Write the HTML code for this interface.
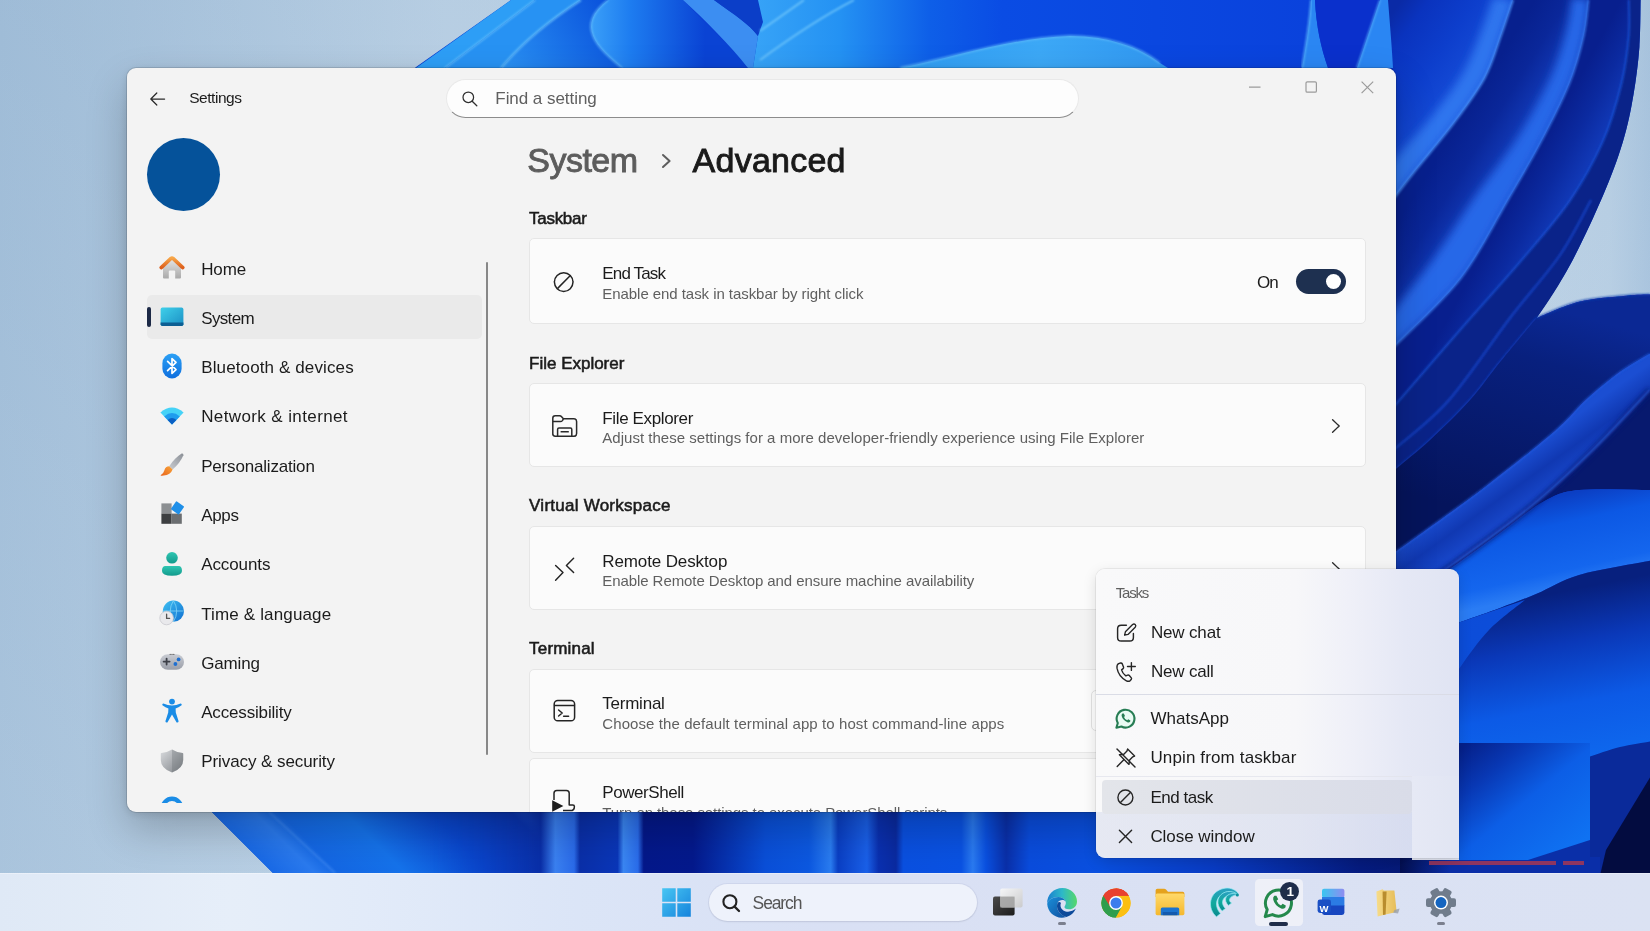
<!DOCTYPE html>
<html lang="en"><head><meta charset="utf-8"><title>Settings</title>
<style>
*{box-sizing:border-box;margin:0;padding:0}
html,body{width:1650px;height:931px;overflow:hidden;background:#abc5dd}
body{position:relative;font-family:"Liberation Sans",sans-serif;color:#1b1b1b}
.abs{position:absolute}
.t{position:absolute;white-space:nowrap;line-height:1}
#win{position:absolute;left:127px;top:68px;width:1269px;height:744px;background:#f3f3f3;border-radius:9px;overflow:hidden;box-shadow:0 0 0 1px rgba(0,0,0,.12),0 18px 40px rgba(0,0,0,.22),0 2px 10px rgba(0,0,0,.12)}
#winclip{position:absolute;left:0;top:0;width:1269px;height:744px;overflow:hidden}
.card{position:absolute;left:402px;width:837px;background:#fbfbfb;border:1px solid #e6e6e6;border-radius:5px}
.sb{position:absolute;left:319px;top:10.6px;width:633px;height:39px;border-radius:20px;background:#fdfdfd;border:1px solid #e9e9e9;border-bottom-color:#8c8c8c}
#menu{position:absolute;left:1096px;top:569px;width:363px;height:289px;border-radius:9px 9px 0 9px;background:linear-gradient(90deg,#f9f9fa 0%,#f7f7f9 55%,#eff0f8 70%,#e5e8f5 85%,#e0e4f3 100%);box-shadow:0 0 0 1px rgba(0,0,0,.06),0 4px 14px rgba(0,0,0,.13);overflow:hidden}
#tb{position:absolute;left:0;top:873px;width:1650px;height:58px;background:linear-gradient(90deg,#dfe9f6 0%,#e6eef9 14%,#e2ebf9 22%,#dbe5f7 35%,#d9e0f4 50%,#dbe2f3 100%)}
.ind{position:absolute;top:49px;height:3px;border-radius:2px;background:#7b7f8e}
#win,#menu,#tb{will-change:transform}
</style>
</head><body>
<svg id="wall" width="1650" height="931" viewBox="0 0 1650 931" style="position:absolute;left:0;top:0">
<defs><linearGradient id="gPale" x1="0" y1="0" x2="1" y2="0"><stop offset="0" stop-color="#a3bfd9"/><stop offset="0.08" stop-color="#abc5dd"/><stop offset="0.27" stop-color="#c2d6e8"/><stop offset="0.9" stop-color="#c6d9ea"/><stop offset="0.975" stop-color="#bfd4e7"/><stop offset="1" stop-color="#adc7e0"/></linearGradient>
<linearGradient id="gPaleV" x1="0" y1="0" x2="0" y2="1"><stop offset="0" stop-color="#8fb0cf" stop-opacity="0.22"/><stop offset="1" stop-color="#c3d7ea" stop-opacity="0.22"/></linearGradient>
<filter id="b1" x="-10%" y="-10%" width="120%" height="120%"><feGaussianBlur stdDeviation="0.8"/></filter><filter id="b2" x="-10%" y="-10%" width="120%" height="120%"><feGaussianBlur stdDeviation="2"/></filter><filter id="b4" x="-20%" y="-20%" width="140%" height="140%"><feGaussianBlur stdDeviation="4"/></filter><filter id="b8" x="-20%" y="-20%" width="140%" height="140%"><feGaussianBlur stdDeviation="9"/></filter>
<linearGradient id="gTopMain" gradientUnits="userSpaceOnUse" x1="750" y1="0" x2="1310" y2="0"><stop offset="0" stop-color="#38a4f7"/><stop offset="0.16" stop-color="#2492f3"/><stop offset="0.32" stop-color="#0e5fe8"/><stop offset="0.45" stop-color="#0a4ce4"/><stop offset="1" stop-color="#0a42dc"/></linearGradient>
<linearGradient id="gP4" gradientUnits="userSpaceOnUse" x1="591" y1="0" x2="705" y2="0"><stop offset="0" stop-color="#3a9ff8"/><stop offset="0.35" stop-color="#1d7cf0"/><stop offset="1" stop-color="#0a43d4"/></linearGradient>
<linearGradient id="gP3" gradientUnits="userSpaceOnUse" x1="500" y1="67" x2="610" y2="10"><stop offset="0" stop-color="#2a93f4"/><stop offset="1" stop-color="#0a52dc"/></linearGradient>
<linearGradient id="gP9" gradientUnits="userSpaceOnUse" x1="900" y1="0" x2="1180" y2="0"><stop offset="0" stop-color="#2f9df4"/><stop offset="0.5" stop-color="#3ca8f6"/><stop offset="1" stop-color="#2f95f0"/></linearGradient>
<linearGradient id="g0" gradientUnits="userSpaceOnUse" x1="1380" y1="30" x2="1470" y2="95"><stop offset="0" stop-color="#0a2aa6"/><stop offset="0.2" stop-color="#0a33be"/><stop offset="0.55" stop-color="#0d3ecc"/><stop offset="1" stop-color="#1850da"/></linearGradient>
<linearGradient id="g1" gradientUnits="userSpaceOnUse" x1="1462" y1="118" x2="1530" y2="160"><stop offset="0" stop-color="#07208e"/><stop offset="0.35" stop-color="#0a279a"/><stop offset="1" stop-color="#1747cc"/></linearGradient>
<linearGradient id="g2" gradientUnits="userSpaceOnUse" x1="1545" y1="140" x2="1600" y2="170"><stop offset="0" stop-color="#081f8e"/><stop offset="0.4" stop-color="#0b2aa0"/><stop offset="1" stop-color="#1440c2"/></linearGradient>
<linearGradient id="gLP" gradientUnits="userSpaceOnUse" x1="1560" y1="310" x2="1500" y2="520"><stop offset="0" stop-color="#0b2894"/><stop offset="0.25" stop-color="#08207e"/><stop offset="1" stop-color="#05145c"/></linearGradient>
<linearGradient id="gE" gradientUnits="userSpaceOnUse" x1="1500" y1="470" x2="1530" y2="512"><stop offset="0" stop-color="#1b4ed2"/><stop offset="0.45" stop-color="#1038b2"/><stop offset="1" stop-color="#1a4cd2"/></linearGradient>
<linearGradient id="gF" gradientUnits="userSpaceOnUse" x1="1540" y1="500" x2="1560" y2="590"><stop offset="0" stop-color="#0b3fc4"/><stop offset="0.3" stop-color="#0c58e4"/><stop offset="0.8" stop-color="#1466ee"/><stop offset="1" stop-color="#2a7cf4"/></linearGradient>
<linearGradient id="gH" gradientUnits="userSpaceOnUse" x1="1520" y1="600" x2="1560" y2="800"><stop offset="0" stop-color="#07207e"/><stop offset="0.25" stop-color="#0a38b8"/><stop offset="0.55" stop-color="#0c5ae6"/><stop offset="1" stop-color="#1070f2"/></linearGradient>
<linearGradient id="gH1" gradientUnits="userSpaceOnUse" x1="1440" y1="640" x2="1500" y2="700"><stop offset="0" stop-color="#0c4cd8"/><stop offset="1" stop-color="#0c50dc"/></linearGradient>
<linearGradient id="gUM" gradientUnits="userSpaceOnUse" x1="1395" y1="0" x2="1450" y2="0"><stop offset="0" stop-color="#030c48"/><stop offset="1" stop-color="#0a2ea8"/></linearGradient>
<linearGradient id="gBot" gradientUnits="userSpaceOnUse" x1="200" y1="0" x2="1650" y2="0"><stop offset="0" stop-color="#1663e0"/><stop offset="0.03" stop-color="#1a6ae6"/><stop offset="0.058" stop-color="#2a7aee"/><stop offset="0.075" stop-color="#1467e3"/><stop offset="0.12" stop-color="#1572ea"/><stop offset="0.18" stop-color="#0a46cc"/><stop offset="0.235" stop-color="#0a2fa8"/><stop offset="0.245" stop-color="#3a80f0"/><stop offset="0.258" stop-color="#2a6ae8"/><stop offset="0.262" stop-color="#0a2fa8"/><stop offset="0.288" stop-color="#0a36b8"/><stop offset="0.292" stop-color="#3a86f2"/><stop offset="0.302" stop-color="#2a6cea"/><stop offset="0.306" stop-color="#04188a"/><stop offset="0.34" stop-color="#04198c"/><stop offset="0.39" stop-color="#0a4fd8"/><stop offset="0.42" stop-color="#0c58e0"/><stop offset="0.435" stop-color="#2a7cf0"/><stop offset="0.44" stop-color="#0a3fc4"/><stop offset="0.46" stop-color="#1a60e8"/><stop offset="0.468" stop-color="#0a30b0"/><stop offset="0.48" stop-color="#0a2aa0"/><stop offset="0.485" stop-color="#0a50e0"/><stop offset="0.525" stop-color="#0a52e2"/><stop offset="0.533" stop-color="#2a7af0"/><stop offset="0.542" stop-color="#0a50e0"/><stop offset="0.556" stop-color="#0a2fa8"/><stop offset="0.572" stop-color="#0a4cdc"/><stop offset="0.62" stop-color="#0a50e0"/><stop offset="0.7" stop-color="#0a3cc4"/><stop offset="0.8" stop-color="#061c80"/><stop offset="1" stop-color="#030c48"/></linearGradient>
<linearGradient id="gBotL" gradientUnits="userSpaceOnUse" x1="200" y1="842" x2="925" y2="117"><stop offset="0" stop-color="#1663e0"/><stop offset="0.03" stop-color="#1a6ae6"/><stop offset="0.058" stop-color="#2a7aee"/><stop offset="0.075" stop-color="#1467e3"/><stop offset="0.12" stop-color="#1572ea"/><stop offset="0.18" stop-color="#0a46cc"/><stop offset="0.235" stop-color="#0a2fa8"/><stop offset="0.245" stop-color="#3a80f0"/><stop offset="0.258" stop-color="#2a6ae8"/><stop offset="0.262" stop-color="#0a2fa8"/><stop offset="0.288" stop-color="#0a36b8"/><stop offset="0.292" stop-color="#3a86f2"/><stop offset="0.302" stop-color="#2a6cea"/><stop offset="0.306" stop-color="#04188a"/><stop offset="0.34" stop-color="#04198c"/><stop offset="0.39" stop-color="#0a4fd8"/><stop offset="0.42" stop-color="#0c58e0"/><stop offset="0.435" stop-color="#2a7cf0"/><stop offset="0.44" stop-color="#0a3fc4"/><stop offset="0.46" stop-color="#1a60e8"/><stop offset="0.468" stop-color="#0a30b0"/><stop offset="0.48" stop-color="#0a2aa0"/><stop offset="0.485" stop-color="#0a50e0"/><stop offset="0.525" stop-color="#0a52e2"/><stop offset="0.533" stop-color="#2a7af0"/><stop offset="0.542" stop-color="#0a50e0"/><stop offset="0.556" stop-color="#0a2fa8"/><stop offset="0.572" stop-color="#0a4cdc"/><stop offset="0.62" stop-color="#0a50e0"/><stop offset="0.7" stop-color="#0a3cc4"/><stop offset="0.8" stop-color="#061c80"/><stop offset="1" stop-color="#030c48"/></linearGradient>
<linearGradient id="gFade" gradientUnits="userSpaceOnUse" x1="430" y1="0" x2="540" y2="0"><stop offset="0" stop-color="#fff"/><stop offset="1" stop-color="#000"/></linearGradient><mask id="mFade" maskUnits="userSpaceOnUse" x="200" y="800" width="400" height="80"><rect x="200" y="800" width="400" height="80" fill="url(#gFade)"/></mask>
<linearGradient id="gRect" gradientUnits="userSpaceOnUse" x1="1465" y1="745" x2="1560" y2="860"><stop offset="0" stop-color="#05208a"/><stop offset="0.25" stop-color="#0838b4"/><stop offset="0.55" stop-color="#0c5ee6"/><stop offset="1" stop-color="#0f72f2"/></linearGradient></defs>
<rect width="1650" height="931" fill="url(#gPale)"/><rect width="1650" height="931" fill="url(#gPaleV)"/>
<path d="M511.0 0.0 L416.0 67.0 L160.0 300.0 L127.0 600.0 L212.0 812.0 L273.0 873.0 L1650.0 873.0 L1650.0 294.6 C1646.0 294.8 1637.8 294.5 1626.0 295.7 C1614.2 296.9 1593.9 298.0 1579.0 301.7 C1564.1 305.4 1543.7 315.3 1536.6 318.0 L1536.6 318.0 C1542.2 309.2 1559.0 285.3 1570.0 265.0 C1581.0 244.7 1594.0 216.5 1602.8 196.0 C1611.6 175.5 1617.8 158.7 1622.9 141.8 C1628.0 124.9 1630.8 110.4 1633.5 94.6 C1636.2 78.8 1638.2 62.8 1639.4 47.0 C1640.6 31.2 1640.4 7.8 1640.6 0.0 Z" fill="#0a3fd2"/>
<path d="M511 0 L535 0 L445 68 L416 68 Z" fill="#2d9ef6"/>
<path d="M535 0 L581 0 C550 20 520 45 501 68 L445 68 Z" fill="#2792f3"/>
<path d="M581 0 L608 0 C592 12 588 24 593 36 C598 48 610 58 622 68 L501 68 C520 45 550 20 581 0 Z" fill="url(#gP3)"/>
<path d="M608 0 C592 12 588 24 593 36 C598 48 610 58 622 68 L750 68 L683 0 Z" fill="url(#gP4)"/>
<path d="M683 0 L714 0 C735 15 750 25 758 36 L753 68 L748 68 C730 45 705 20 683 0 Z" fill="#3c8ef2"/>
<path d="M714 0 L758 0 L763 22 L758 36 C750 25 735 15 714 0 Z" fill="#0b3ec8"/>
<path d="M753 68 L758 36 L763 22 L758 0 L1310 0 L1310 68 Z" fill="url(#gTopMain)"/>
<path d="M760 31 L804 0 M760 60 C790 38 825 15 854 0" stroke="#6cc4fb" stroke-width="1.6" fill="none" filter="url(#b1)"/>
<path d="M900 68 C960 56 1010 38 1070 36 C1110 36 1140 48 1160 63 L1168 68 Z" fill="url(#gP9)"/>
<path d="M900 68 C960 56 1010 38 1070 36 C1110 36 1140 48 1160 63" stroke="#62bcfa" stroke-width="1.5" fill="none" filter="url(#b1)"/>
<path d="M1311 0 L1315 0 C1316 25 1321 48 1328 68 L1302 68 C1306 45 1310 22 1311 0 Z" fill="#2a86f3"/><path d="M1311 0 C1310 22 1306 45 1302 68" stroke="#5ab4fa" stroke-width="1.6" fill="none" filter="url(#b1)"/>
<path d="M1315 0 L1380 0 L1357 68 L1328 68 C1321 48 1316 25 1315 0 Z" fill="#0a30cc"/>

<path d="M535 0 L445 68 M581 0 C550 20 520 45 501 68" stroke="#6ec6fc" stroke-width="1.5" fill="none" filter="url(#b1)"/>
<path d="M608 0 C592 12 588 24 593 36 C598 48 610 58 622 68" stroke="#66bdfb" stroke-width="1.5" fill="none" filter="url(#b1)"/>
<path d="M1385.0 0.0 L1513.0 0.0 C1511.0 5.9 1505.7 22.5 1501.0 35.5 C1496.3 48.5 1492.5 63.4 1484.6 78.0 C1476.7 92.6 1465.6 107.2 1453.8 123.0 C1442.0 138.8 1425.1 158.1 1413.6 172.6 C1402.1 187.1 1389.8 203.8 1385.0 210.0 Z" fill="url(#g0)"/>
<path d="M1493.0 -3.0 C1491.0 2.8 1486.0 19.3 1481.0 32.0 C1476.0 44.7 1471.0 59.2 1463.0 73.0 C1455.0 86.8 1444.5 100.5 1433.0 115.0 C1421.5 129.5 1403.0 149.7 1394.0 160.0 C1385.0 170.3 1381.5 174.2 1379.0 177.0 L1385.0 210.0 C1389.8 203.8 1402.1 187.1 1413.6 172.6 C1425.1 158.1 1442.0 138.8 1453.8 123.0 C1465.6 107.2 1476.7 92.6 1484.6 78.0 C1492.5 63.4 1496.3 48.5 1501.0 35.5 C1505.7 22.5 1511.0 5.9 1513.0 0.0 Z" fill="#2d74ee" filter="url(#b4)"/>
<path d="M1513.0 0.0 C1511.0 5.9 1505.7 22.5 1501.0 35.5 C1496.3 48.5 1492.5 63.4 1484.6 78.0 C1476.7 92.6 1465.6 107.2 1453.8 123.0 C1442.0 138.8 1425.1 158.1 1413.6 172.6 C1402.1 187.1 1389.8 203.8 1385.0 210.0 L1385.0 356.0 C1387.0 354.0 1384.3 357.0 1397.0 344.0 C1409.7 331.0 1442.5 302.0 1461.0 278.0 C1479.5 254.0 1494.7 222.7 1508.0 200.0 C1521.3 177.3 1530.7 161.6 1541.0 142.0 C1551.3 122.5 1562.6 100.5 1569.7 82.7 C1576.8 65.0 1580.7 49.3 1583.8 35.5 C1586.9 21.7 1587.8 5.9 1588.6 0.0 Z" fill="url(#g1)"/>
<path d="M1513.0 0.0 C1511.0 5.9 1505.7 22.5 1501.0 35.5 C1496.3 48.5 1492.5 63.4 1484.6 78.0 C1476.7 92.6 1465.6 107.2 1453.8 123.0 C1442.0 138.8 1425.1 158.1 1413.6 172.6 C1402.1 187.1 1389.8 203.8 1385.0 210.0" stroke="#4c94f8" stroke-width="1.8" fill="none" filter="url(#b1)"/>
<path d="M1572.0 -3.0 C1571.0 2.8 1569.7 18.3 1566.0 32.0 C1562.3 45.7 1558.2 61.2 1550.0 79.0 C1541.8 96.8 1529.5 119.3 1517.0 139.0 C1504.5 158.7 1488.7 177.3 1475.0 197.0 C1461.3 216.7 1448.8 237.7 1435.0 257.0 C1421.2 276.3 1401.2 301.3 1392.0 313.0 C1382.8 324.7 1382.0 324.7 1380.0 327.0 L1385.0 356.0 C1387.0 354.0 1384.3 357.0 1397.0 344.0 C1409.7 331.0 1442.5 302.0 1461.0 278.0 C1479.5 254.0 1494.7 222.7 1508.0 200.0 C1521.3 177.3 1530.7 161.6 1541.0 142.0 C1551.3 122.5 1562.6 100.5 1569.7 82.7 C1576.8 65.0 1580.7 49.3 1583.8 35.5 C1586.9 21.7 1587.8 5.9 1588.6 0.0 Z" fill="#2668e8" filter="url(#b4)"/>
<path d="M1588.6 0.0 C1587.8 5.9 1586.9 21.7 1583.8 35.5 C1580.7 49.3 1576.8 65.0 1569.7 82.7 C1562.6 100.5 1551.3 122.5 1541.0 142.0 C1530.7 161.6 1521.3 177.3 1508.0 200.0 C1494.7 222.7 1479.5 254.0 1461.0 278.0 C1442.5 302.0 1409.7 331.0 1397.0 344.0 C1384.3 357.0 1387.0 354.0 1385.0 356.0 L1385.0 415.0 C1387.0 413.0 1384.5 417.2 1397.0 403.0 C1409.5 388.8 1439.5 353.5 1460.0 330.0 C1480.5 306.5 1501.7 283.5 1520.0 262.0 C1538.3 240.5 1555.9 221.0 1569.7 201.0 C1583.5 181.0 1594.1 161.5 1602.8 141.8 C1611.5 122.1 1617.4 100.4 1621.7 82.7 C1626.0 65.0 1627.6 49.3 1628.8 35.5 C1630.0 21.7 1628.8 5.9 1628.8 0.0 Z" fill="url(#g2)"/>
<path d="M1588.6 0.0 C1587.8 5.9 1586.9 21.7 1583.8 35.5 C1580.7 49.3 1576.8 65.0 1569.7 82.7 C1562.6 100.5 1551.3 122.5 1541.0 142.0 C1530.7 161.6 1521.3 177.3 1508.0 200.0 C1494.7 222.7 1479.5 254.0 1461.0 278.0 C1442.5 302.0 1409.7 331.0 1397.0 344.0 C1384.3 357.0 1387.0 354.0 1385.0 356.0" stroke="#3f84f4" stroke-width="1.5" fill="none" filter="url(#b1)"/>
<path d="M1628.8 0.0 C1628.8 5.9 1630.0 21.7 1628.8 35.5 C1627.6 49.3 1626.0 65.0 1621.7 82.7 C1617.4 100.4 1611.5 122.1 1602.8 141.8 C1594.1 161.5 1583.5 181.0 1569.7 201.0 C1555.9 221.0 1538.3 240.5 1520.0 262.0 C1501.7 283.5 1480.5 306.5 1460.0 330.0 C1439.5 353.5 1409.5 388.8 1397.0 403.0 C1384.5 417.2 1387.0 413.0 1385.0 415.0 L1385.0 478.0 C1387.0 476.3 1389.5 474.3 1397.0 468.0 C1404.5 461.7 1417.8 451.3 1430.0 440.0 C1442.2 428.7 1458.3 413.0 1470.0 400.0 C1481.7 387.0 1488.9 375.7 1500.0 362.0 C1511.1 348.3 1524.9 334.2 1536.6 318.0 C1548.3 301.8 1559.0 285.3 1570.0 265.0 C1581.0 244.7 1594.0 216.5 1602.8 196.0 C1611.6 175.5 1617.8 158.7 1622.9 141.8 C1628.0 124.9 1630.8 110.4 1633.5 94.6 C1636.2 78.8 1638.2 62.8 1639.4 47.0 C1640.6 31.2 1640.4 7.8 1640.6 0.0 Z" fill="#0a2389"/>
<path d="M1628.8 0.0 C1628.8 5.9 1630.0 21.7 1628.8 35.5 C1627.6 49.3 1626.0 65.0 1621.7 82.7 C1617.4 100.4 1611.5 122.1 1602.8 141.8 C1594.1 161.5 1583.5 181.0 1569.7 201.0 C1555.9 221.0 1538.3 240.5 1520.0 262.0 C1501.7 283.5 1480.5 306.5 1460.0 330.0 C1439.5 353.5 1409.5 388.8 1397.0 403.0 C1384.5 417.2 1387.0 413.0 1385.0 415.0" stroke="#1d52d4" stroke-width="1.6" fill="none" filter="url(#b1)"/>
<path d="M1591.0 200.0 C1585.8 209.2 1573.5 235.3 1560.0 255.0 C1546.5 274.7 1528.5 293.8 1510.0 318.0 C1491.5 342.2 1467.8 378.5 1449.0 400.0 C1430.2 421.5 1407.7 437.5 1397.0 447.0 C1386.3 456.5 1387.0 455.3 1385.0 457.0" stroke="#153fc0" stroke-width="2.2" fill="none" filter="url(#b1)"/>
<path d="M1536.6 318.0 C1530.5 325.3 1511.1 348.3 1500.0 362.0 C1488.9 375.7 1481.7 387.0 1470.0 400.0 C1458.3 413.0 1442.2 428.7 1430.0 440.0 C1417.8 451.3 1404.5 461.7 1397.0 468.0 C1389.5 474.3 1387.0 476.3 1385.0 478.0" stroke="#123ab8" stroke-width="2.0" fill="none" filter="url(#b1)"/>
<path d="M1380 0 L1388 0 C1390 25 1392 48 1393 68 L1357 68 Z" fill="#2a86f3"/><path d="M1380 0 L1357 68" stroke="#55aef9" stroke-width="1.5" fill="none" filter="url(#b1)"/>
<path d="M1536.6 318.0 C1543.7 315.3 1564.1 305.4 1579.0 301.7 C1593.9 298.0 1614.2 296.9 1626.0 295.7 C1637.8 294.5 1646.0 294.8 1650.0 294.6 L1650.0 353.7 L1650.0 353.7 C1645.0 356.8 1630.7 364.3 1620.0 372.0 C1609.3 379.7 1596.8 390.2 1586.0 400.0 C1575.2 409.8 1572.4 416.1 1555.5 430.7 C1538.6 445.3 1511.0 467.4 1484.6 487.5 C1458.2 507.6 1413.6 539.2 1397.0 551.0 C1380.4 562.8 1387.0 556.8 1385.0 558.0 L1385.0 478.0 C1387.0 476.3 1389.5 474.3 1397.0 468.0 C1404.5 461.7 1417.8 451.3 1430.0 440.0 C1442.2 428.7 1458.3 413.0 1470.0 400.0 C1481.7 387.0 1488.9 375.7 1500.0 362.0 C1511.1 348.3 1530.5 325.3 1536.6 318.0 Z" fill="url(#gLP)"/>
<path d="M1536.6 318.0 C1543.7 315.3 1564.1 305.4 1579.0 301.7 C1593.9 298.0 1614.2 296.9 1626.0 295.7 C1637.8 294.5 1646.0 294.8 1650.0 294.6" stroke="#1038ac" stroke-width="1.6" fill="none" filter="url(#b1)"/>
<path d="M1385.0 558.0 C1387.0 556.8 1380.4 562.8 1397.0 551.0 C1413.6 539.2 1458.2 507.6 1484.6 487.5 C1511.0 467.4 1538.6 445.3 1555.5 430.7 C1572.4 416.1 1575.2 409.8 1586.0 400.0 C1596.8 390.2 1609.3 379.7 1620.0 372.0 C1630.7 364.3 1645.0 356.8 1650.0 353.7 L1650.0 390.0 C1648.4 391.7 1650.4 389.7 1640.6 400.0 C1630.8 410.3 1609.1 434.3 1591.0 452.0 C1572.9 469.7 1555.0 487.1 1531.8 506.0 C1508.5 524.9 1476.0 548.2 1451.5 565.5 C1427.0 582.8 1396.1 602.6 1385.0 610.0 Z" fill="url(#gE)"/>
<path d="M1385.0 558.0 C1387.0 556.8 1380.4 562.8 1397.0 551.0 C1413.6 539.2 1458.2 507.6 1484.6 487.5 C1511.0 467.4 1538.6 445.3 1555.5 430.7 C1572.4 416.1 1575.2 409.8 1586.0 400.0 C1596.8 390.2 1609.3 379.7 1620.0 372.0 C1630.7 364.3 1645.0 356.8 1650.0 353.7" stroke="#2258dc" stroke-width="1.5" fill="none" filter="url(#b1)"/>
<path d="M1385.0 610.0 C1396.1 602.6 1427.0 582.8 1451.5 565.5 C1476.0 548.2 1508.5 524.9 1531.8 506.0 C1555.0 487.1 1572.9 469.7 1591.0 452.0 C1609.1 434.3 1630.8 410.3 1640.6 400.0 C1650.4 389.7 1648.4 391.7 1650.0 390.0 L1650.0 490.0 C1638.2 490.0 1596.7 488.1 1579.0 490.0 C1561.3 491.9 1556.9 494.4 1543.7 501.6 C1530.5 508.8 1515.5 521.9 1500.0 533.0 C1484.5 544.1 1470.2 554.8 1451.0 568.0 C1431.8 581.2 1396.0 604.7 1385.0 612.0 Z" fill="#07196e"/>
<path d="M1650.0 490.0 C1638.2 490.0 1596.7 488.1 1579.0 490.0 C1561.3 491.9 1556.9 494.4 1543.7 501.6 C1530.5 508.8 1515.5 521.9 1500.0 533.0 C1484.5 544.1 1470.2 554.8 1451.0 568.0 C1431.8 581.2 1396.0 604.7 1385.0 612.0 L1385.0 650.0 C1397.3 645.4 1439.8 629.6 1459.0 622.6 C1478.2 615.6 1487.1 612.8 1500.0 608.0 C1512.9 603.2 1523.4 599.3 1536.6 593.8 C1549.8 588.3 1560.1 580.5 1579.0 575.0 C1597.9 569.5 1638.2 563.2 1650.0 560.8 Z" fill="url(#gF)"/>
<path d="M1385.0 610.0 C1396.1 602.6 1427.0 582.8 1451.5 565.5 C1476.0 548.2 1508.5 524.9 1531.8 506.0 C1555.0 487.1 1572.9 469.7 1591.0 452.0 C1609.1 434.3 1630.8 410.3 1640.6 400.0 C1650.4 389.7 1648.4 391.7 1650.0 390.0" stroke="#071c7c" stroke-width="7" fill="none" filter="url(#b2)" opacity="0.7"/>
<path d="M1385.0 610.0 C1396.1 602.6 1427.0 582.8 1451.5 565.5 C1476.0 548.2 1508.5 524.9 1531.8 506.0 C1555.0 487.1 1572.9 469.7 1591.0 452.0 C1609.1 434.3 1630.8 410.3 1640.6 400.0 C1650.4 389.7 1648.4 391.7 1650.0 390.0" stroke="#2a62e0" stroke-width="1.4" fill="none" filter="url(#b1)"/>
<path d="M1650.0 560.8 C1638.2 563.2 1597.9 569.5 1579.0 575.0 C1560.1 580.5 1549.8 588.3 1536.6 593.8 C1523.4 599.3 1512.9 603.2 1500.0 608.0 C1487.1 612.8 1478.2 615.6 1459.0 622.6 C1439.8 629.6 1397.3 645.4 1385.0 650.0 L1385.0 873.0 L1650.0 873.0 Z" fill="url(#gH)"/>
<path d="M1525.0 600.0 C1519.0 605.0 1500.0 618.5 1489.0 630.0 C1478.0 641.5 1467.2 657.3 1459.0 669.0 C1450.8 680.7 1443.2 694.8 1440.0 700.0 L1385.0 760.0 L1385.0 650.0 L1459.0 622.6 Z" fill="url(#gH1)"/>
<path d="M1590.0 756.5 C1595.0 754.9 1610.0 749.5 1620.0 747.0 C1630.0 744.5 1645.0 742.3 1650.0 741.4 L1650.0 873.0 L1560.0 873.0 L1590.0 800.0 Z" fill="#0a2a9a"/>
<path d="M1600.6 873.0 L1606.0 850.0 L1650.0 777.5 L1650.0 873.0 Z" fill="#030c40"/>
<path d="M1395 857 H1600 V873 H1395 Z" fill="url(#gUM)"/>
<path d="M212 812 L273 873 L1400 873 L1400 812 Z" fill="url(#gBot)"/>
<path d="M212 812 L273 873 L560 873 L560 812 Z" fill="url(#gBotL)" mask="url(#mFade)"/>
<path d="M269 812 L335 873" stroke="#3a86f0" stroke-width="1.5" fill="none" filter="url(#b1)"/>
<rect x="1459" y="743" width="131" height="117" fill="url(#gRect)"/>
<path d="M1528 860 L1590 840 L1590 860 Z" fill="#0a2fa8"/>
<rect x="1429" y="861" width="127" height="4" fill="#8e3560"/><rect x="1563" y="861" width="21" height="4" fill="#8e3560"/>
</svg>
<div id="win"><div id="winclip">
<!-- titlebar -->
<svg class="abs" style="left:21.5px;top:22.7px" width="18" height="16" viewBox="0 0 18 16"><path d="M7.8 2 L1.8 8 L7.8 14 M2 8 H15.6" stroke="#2b2b2b" stroke-width="1.25" fill="none" stroke-linecap="round" stroke-linejoin="round"/></svg>
<div class="sb"></div>
<svg class="abs" style="left:334px;top:22px" width="18" height="18" viewBox="0 0 18 18"><circle cx="7.3" cy="7.3" r="5.3" stroke="#2f2f2f" stroke-width="1.25" fill="none"/><path d="M11.2 11.2 L15.8 15.8" stroke="#2f2f2f" stroke-width="1.3" stroke-linecap="round"/></svg>
<svg class="abs" style="left:1120px;top:10px" width="130" height="20" viewBox="0 0 130 20"><path d="M2 9.2 H13.5" stroke="#9b9b9b" stroke-width="1.2"/><rect x="59" y="3.8" width="10.4" height="10.4" rx="1.3" stroke="#9b9b9b" stroke-width="1.2" fill="none"/><path d="M114.6 3.6 L126.2 15.2 M126.2 3.6 L114.6 15.2" stroke="#9b9b9b" stroke-width="1.2"/></svg>
<!-- avatar -->
<div class="abs" style="left:20px;top:69.5px;width:73px;height:73px;border-radius:50%;background:#05529a"></div>
<!-- nav -->
<div class="abs" style="left:19.5px;top:226.5px;width:335px;height:44.5px;border-radius:5px;background:#eaeaea"></div>
<div class="abs" style="left:19.5px;top:239px;width:4px;height:20px;border-radius:2px;background:#1c2946"></div>
<div class="abs" style="left:359.2px;top:193.5px;width:2.3px;height:493px;border-radius:1.2px;background:#878787"></div>
<svg class="abs" style="left:32px;top:187px" width="26" height="26" viewBox="0 0 26 26"><defs><linearGradient id="hR" x1="0" y1="0" x2="0" y2="1"><stop offset="0" stop-color="#f7a648"/><stop offset="1" stop-color="#dd5f1c"/></linearGradient><linearGradient id="hW" x1="0" y1="0" x2="0" y2="1"><stop offset="0" stop-color="#e6e6e6"/><stop offset="1" stop-color="#a9a9a9"/></linearGradient></defs>
<path d="M4 11.5 L13 4 L22 11.5 V22.4 Q22 23.4 21 23.4 H16.2 V16.4 Q16.2 15.4 15.2 15.4 H10.8 Q9.8 15.4 9.8 16.4 V23.4 H5 Q4 23.4 4 22.4 Z" fill="url(#hW)"/>
<path d="M2.2 12.6 L12 3.4 Q13 2.6 14 3.4 L23.8 12.6" stroke="url(#hR)" stroke-width="3.6" fill="none" stroke-linecap="round" stroke-linejoin="round"/></svg>
<svg class="abs" style="left:32px;top:236px" width="26" height="26" viewBox="0 0 26 26"><defs><linearGradient id="sG" x1="0" y1="0" x2="1" y2="1"><stop offset="0" stop-color="#3fd0ea"/><stop offset="1" stop-color="#1b8fc4"/></linearGradient></defs>
<rect x="1.6" y="3.6" width="22.8" height="18.4" rx="1.8" fill="url(#sG)"/><path d="M1.6 18.6 H24.4 V20.2 Q24.4 22 22.6 22 H3.4 Q1.6 22 1.6 20.2 Z" fill="#0d5f93"/></svg>
<svg class="abs" style="left:32px;top:285px" width="26" height="26" viewBox="0 0 26 26"><defs><linearGradient id="bG" x1="0" y1="0" x2="0" y2="1"><stop offset="0" stop-color="#2ba0f5"/><stop offset="1" stop-color="#0f6fde"/></linearGradient></defs>
<rect x="3.4" y="0.6" width="19.2" height="24.8" rx="9.6" fill="url(#bG)"/><path d="M8.6 8.4 L17 16.6 L13 20.4 V5.6 L17 9.4 L8.6 17.6" stroke="#fff" stroke-width="1.7" fill="none" stroke-linejoin="round" stroke-linecap="round"/></svg>
<svg class="abs" style="left:32px;top:335px" width="26" height="26" viewBox="0 0 26 26"><path d="M13 21.6 L1.4 9.6 Q13 -0.4 24.6 9.6 Z" fill="#45d2f7"/><path d="M13 21.6 L5.2 13.4 Q13 6.8 20.8 13.4 Z" fill="#1f9cee"/><path d="M13 21.6 L8.6 17 Q13 13.2 17.4 17 Z" fill="#0a5fc4"/></svg>
<svg class="abs" style="left:32px;top:384px" width="26" height="26" viewBox="0 0 26 26"><defs><linearGradient id="pG" x1="1" y1="0" x2="0" y2="1"><stop offset="0" stop-color="#8a8f96"/><stop offset="1" stop-color="#c9ccd1"/></linearGradient><linearGradient id="pO" x1="1" y1="0" x2="0" y2="1"><stop offset="0" stop-color="#f8a53a"/><stop offset="1" stop-color="#e9641c"/></linearGradient></defs>
<path d="M22.6 1.6 Q24.6 1 24.4 3.2 Q21 11 13.6 17.6 L10.2 14.2 Q15.6 6.2 22.6 1.6 Z" fill="url(#pG)"/><path d="M10.2 14.2 L13.6 17.6 Q11.6 23 4.6 23.6 Q1.8 24 1.6 23.2 Q4.6 21.6 5.4 18.2 Q6.4 14.4 10.2 14.2 Z" fill="url(#pO)"/></svg>
<svg class="abs" style="left:32px;top:433px" width="26" height="26" viewBox="0 0 26 26"><rect x="2.4" y="2.4" width="10.2" height="10.2" fill="#8c8f92"/><rect x="2.4" y="12.6" width="10.2" height="10.2" fill="#3d3f41"/><rect x="12.6" y="12.6" width="10.2" height="10.2" fill="#6b6e71"/><rect x="13.6" y="2" width="9.8" height="9.8" rx="0.8" transform="rotate(35 18.5 6.9)" fill="#1f8fe8"/></svg>
<svg class="abs" style="left:32px;top:483px" width="26" height="26" viewBox="0 0 26 26"><defs><linearGradient id="aG" x1="0" y1="0" x2="0" y2="1"><stop offset="0" stop-color="#2fc6b2"/><stop offset="1" stop-color="#129a8c"/></linearGradient></defs>
<circle cx="13" cy="6.8" r="5.8" fill="url(#aG)"/><path d="M3 20 Q3 15 6.4 15 H19.6 Q23 15 23 20 Q23 24.8 13 24.8 Q3 24.8 3 20 Z" fill="url(#aG)"/></svg>
<svg class="abs" style="left:32px;top:532px" width="26" height="26" viewBox="0 0 26 26"><defs><linearGradient id="tG" x1="0" y1="0" x2="1" y2="1"><stop offset="0" stop-color="#3fc0f2"/><stop offset="1" stop-color="#0f6fd0"/></linearGradient></defs>
<circle cx="14.4" cy="11.2" r="10.6" fill="url(#tG)"/><path d="M14.4 0.6 Q8 11 14.4 21.8 M14.4 0.6 Q21 11 14.4 21.8 M4 11 H24.8" stroke="#8fdcfa" stroke-width="1" fill="none" opacity="0.7"/><circle cx="7.6" cy="18" r="6.8" fill="#e9e9ec" stroke="#c9c9cf" stroke-width="0.8"/><path d="M7.6 14.2 V18.4 H10.6" stroke="#555" stroke-width="1.3" fill="none" stroke-linecap="round" stroke-linejoin="round"/></svg>
<svg class="abs" style="left:32px;top:581px" width="26" height="26" viewBox="0 0 26 26"><defs><linearGradient id="gG" x1="0" y1="0" x2="0" y2="1"><stop offset="0" stop-color="#c9ccd3"/><stop offset="1" stop-color="#9a9ea8"/></linearGradient></defs>
<rect x="1" y="5.2" width="24" height="15.6" rx="7.8" fill="url(#gG)"/><path d="M7.6 9.6 V15.6 M4.6 12.6 H10.6" stroke="#3d4048" stroke-width="1.8" stroke-linecap="round"/><circle cx="19.6" cy="10.4" r="1.9" fill="#1f6fd0"/><circle cx="16.4" cy="15" r="1.9" fill="#1f6fd0"/><circle cx="11.2" cy="5.4" r="0.7" fill="#666"/><circle cx="13" cy="5.4" r="0.7" fill="#666"/><circle cx="14.8" cy="5.4" r="0.7" fill="#666"/></svg>
<svg class="abs" style="left:32px;top:630px" width="26" height="26" viewBox="0 0 26 26"><circle cx="13" cy="3.6" r="2.9" fill="#1a8ce6"/><path d="M3.4 7.2 Q2.8 5.6 4.4 5.4 Q13 9.4 21.6 5.4 Q23.2 5.6 22.6 7.2 Q19.4 9.6 16.6 10.4 L16.8 14.6 L19.6 23.2 Q19.4 24.8 17.6 24.4 L13 16.4 L8.4 24.4 Q6.6 24.8 6.4 23.2 L9.2 14.6 L9.4 10.4 Q6.6 9.6 3.4 7.2 Z" fill="#1a8ce6"/></svg>
<svg class="abs" style="left:32px;top:680px" width="26" height="26" viewBox="0 0 26 26"><defs><linearGradient id="vG" x1="0" y1="0" x2="1" y2="1"><stop offset="0" stop-color="#d9dbde"/><stop offset="1" stop-color="#7d8186"/></linearGradient></defs>
<path d="M13 1.6 Q17.6 4.6 23.6 5 Q24.2 5 24.2 5.8 V12 Q24.2 20.4 13 24.6 Q1.8 20.4 1.8 12 V5.8 Q1.8 5 2.4 5 Q8.4 4.6 13 1.6 Z" fill="url(#vG)"/><path d="M13 1.6 Q17.6 4.6 23.6 5 Q24.2 5 24.2 5.8 V12 Q24.2 20.4 13 24.6 Z" fill="#5f6368" opacity="0.28"/></svg>
<div class="abs" style="left:32px;top:727px;width:26px;height:7.5px;overflow:hidden"><svg class="abs" style="left:0;top:0" width="26" height="26" viewBox="0 0 26 26"><path d="M1.6 13 A11.4 11.4 0 0 1 24.4 13 L20 13 A7 7 0 0 0 6 13 Z" fill="#1a8ce6"/></svg></div>
<!-- breadcrumb chevron -->
<svg class="abs" style="left:533px;top:84px" width="14" height="18" viewBox="0 0 14 18"><path d="M3 3 L9.6 9 L3 15" stroke="#5d5d5d" stroke-width="2" fill="none" stroke-linecap="round" stroke-linejoin="round"/></svg>
<!-- cards -->
<div class="card" style="top:170px;height:85.5px"></div>
<div class="card" style="top:315px;height:83.5px"></div>
<div class="card" style="top:458px;height:83.5px"></div>
<div class="card" style="top:600.5px;height:84px"></div>
<div class="card" style="top:689.5px;height:84px"></div>
<div class="abs" style="left:964px;top:622px;width:130px;height:41px;border:1px solid #e2e2e2;border-radius:5px;background:#fdfdfd"></div>
<!-- card icons -->
<svg class="abs" style="left:425px;top:203px" width="24" height="24" viewBox="0 0 24 24"><circle cx="11.7" cy="11.1" r="9.3" stroke="#242424" stroke-width="1.5" fill="none"/><path d="M5.4 17.6 L18.1 4.7" stroke="#242424" stroke-width="1.5"/></svg>
<svg class="abs" style="left:423px;top:345px" width="30" height="26" viewBox="0 0 30 26"><path d="M2.8 21.5 V5.2 Q2.8 2.8 5.2 2.8 H9.6 Q10.8 2.8 11.6 3.7 L13.4 5.8 H24 Q26.6 5.8 26.6 8.4 V20.6 Q26.6 23.2 24 23.2 H5.2 Q2.8 23.2 2.8 20.8 Z M2.8 8.6 H10.4 Q11.6 8.6 12.4 7.6 L13.4 5.8" stroke="#2a2a2a" stroke-width="1.5" fill="none" stroke-linejoin="round"/><path d="M7.6 23 V16.4 Q7.6 15 9 15 H20.4 Q21.8 15 21.8 16.4 V23 M10.6 18.8 H18.8" stroke="#2a2a2a" stroke-width="1.5" fill="none"/></svg>
<svg class="abs" style="left:425px;top:487px" width="24" height="28" viewBox="0 0 24 28"><path d="M3.6 10.4 L11 17.6 L3.6 25.2" stroke="#242424" stroke-width="1.45" fill="none" stroke-linecap="round" stroke-linejoin="round"/><path d="M21.6 3.2 L14.4 10.4 L21.6 17.6" stroke="#242424" stroke-width="1.45" fill="none" stroke-linecap="round" stroke-linejoin="round"/></svg>
<svg class="abs" style="left:425px;top:630px" width="26" height="26" viewBox="0 0 26 26"><rect x="2.2" y="2.4" width="20.4" height="20.4" rx="3.6" stroke="#242424" stroke-width="1.5" fill="none"/><path d="M2.6 7.4 H22.4 M6.6 12 L10.2 15 L6.6 18 M11.6 18.2 H16.6" stroke="#242424" stroke-width="1.5" fill="none" stroke-linecap="round" stroke-linejoin="round"/></svg>
<svg class="abs" style="left:424px;top:720px" width="28" height="26" viewBox="0 0 28 26"><path d="M3 12 V5.2 Q3 2.4 5.8 2.4 H15.4 Q18.2 2.4 18.2 5.2 V17 H21.8 Q23.4 17 23.4 18.4 Q23.4 22.6 19.4 22.6 H12" stroke="#242424" stroke-width="1.5" fill="none" stroke-linejoin="round"/><path d="M1.2 12.2 L12.4 18 L1.2 23.8 Z" fill="#1d1d1d"/></svg>
<!-- toggle -->
<div class="abs" style="left:1169px;top:201px;width:50px;height:25px;border-radius:12.5px;background:#1e3050"></div>
<div class="abs" style="left:1198.5px;top:205.7px;width:15.6px;height:15.6px;border-radius:50%;background:#fff"></div>
<!-- chevrons -->
<svg class="abs" style="left:1203px;top:350px" width="12" height="16" viewBox="0 0 12 16"><path d="M2.6 1.8 L9.2 8 L2.6 14.2" stroke="#2a2a2a" stroke-width="1.35" fill="none" stroke-linecap="round" stroke-linejoin="round"/></svg>
<svg class="abs" style="left:1203px;top:493px" width="12" height="16" viewBox="0 0 12 16"><path d="M2.6 1.8 L9.2 8 L2.6 14.2" stroke="#2a2a2a" stroke-width="1.35" fill="none" stroke-linecap="round" stroke-linejoin="round"/></svg>
<span class="t" style="left:62.20px;top:22px;font-size:15.5px;letter-spacing:-0.463px;color:#1b1b1b;">Settings</span>
<span class="t" style="left:368.30px;top:22px;font-size:17px;letter-spacing:-0.045px;color:#606060;">Find a setting</span>
<span class="t" style="left:400.30px;top:75px;font-size:34px;letter-spacing:-0.518px;color:#5c5c5c;-webkit-text-stroke:0.9px #5c5c5c;">System</span>
<span class="t" style="left:565.60px;top:75px;font-size:34px;letter-spacing:0.242px;color:#1a1a1a;-webkit-text-stroke:0.9px #1a1a1a;">Advanced</span>
<span class="t" style="left:402.10px;top:142px;font-size:17px;letter-spacing:-0.301px;color:#1b1b1b;-webkit-text-stroke:0.55px #1b1b1b;">Taskbar</span>
<span class="t" style="left:402.10px;top:287px;font-size:17px;letter-spacing:-0.013px;color:#1b1b1b;-webkit-text-stroke:0.55px #1b1b1b;">File Explorer</span>
<span class="t" style="left:402.10px;top:429px;font-size:17px;letter-spacing:0.246px;color:#1b1b1b;-webkit-text-stroke:0.55px #1b1b1b;">Virtual Workspace</span>
<span class="t" style="left:402.10px;top:572px;font-size:17px;letter-spacing:0.176px;color:#1b1b1b;-webkit-text-stroke:0.55px #1b1b1b;">Terminal</span>
<span class="t" style="left:475.30px;top:197px;font-size:17px;letter-spacing:-0.844px;color:#1b1b1b;">End Task</span>
<span class="t" style="left:475.30px;top:218px;font-size:15px;letter-spacing:-0.056px;color:#5f5f5f;">Enable end task in taskbar by right click</span>
<span class="t" style="left:475.30px;top:342px;font-size:17px;letter-spacing:-0.363px;color:#1b1b1b;">File Explorer</span>
<span class="t" style="left:475.30px;top:362px;font-size:15px;letter-spacing:0.021px;color:#5f5f5f;">Adjust these settings for a more developer-friendly experience using File Explorer</span>
<span class="t" style="left:475.30px;top:485px;font-size:17px;letter-spacing:-0.120px;color:#1b1b1b;">Remote Desktop</span>
<span class="t" style="left:475.30px;top:505px;font-size:15px;letter-spacing:-0.078px;color:#5f5f5f;">Enable Remote Desktop and ensure machine availability</span>
<span class="t" style="left:475.30px;top:627px;font-size:17px;letter-spacing:-0.238px;color:#1b1b1b;">Terminal</span>
<span class="t" style="left:475.30px;top:648px;font-size:15px;letter-spacing:0.091px;color:#5f5f5f;">Choose the default terminal app to host command-line apps</span>
<span class="t" style="left:475.30px;top:716px;font-size:17px;letter-spacing:-0.448px;color:#1b1b1b;">PowerShell</span>
<span class="t" style="left:475.30px;top:737px;font-size:15px;letter-spacing:-0.075px;color:#5f5f5f;">Turn on these settings to execute PowerShell scripts</span>
<span class="t" style="left:1130.00px;top:206px;font-size:17px;letter-spacing:-0.905px;color:#1b1b1b;">On</span>
<span class="t" style="left:74.20px;top:193px;font-size:17px;letter-spacing:-0.134px;color:#1b1b1b;">Home</span>
<span class="t" style="left:74.20px;top:242px;font-size:17px;letter-spacing:-0.641px;color:#1b1b1b;">System</span>
<span class="t" style="left:74.20px;top:291px;font-size:17px;letter-spacing:0.123px;color:#1b1b1b;">Bluetooth &amp; devices</span>
<span class="t" style="left:74.20px;top:340px;font-size:17px;letter-spacing:0.386px;color:#1b1b1b;">Network &amp; internet</span>
<span class="t" style="left:74.20px;top:390px;font-size:17px;letter-spacing:-0.185px;color:#1b1b1b;">Personalization</span>
<span class="t" style="left:74.20px;top:439px;font-size:17px;letter-spacing:-0.320px;color:#1b1b1b;">Apps</span>
<span class="t" style="left:74.20px;top:488px;font-size:17px;letter-spacing:-0.095px;color:#1b1b1b;">Accounts</span>
<span class="t" style="left:74.20px;top:538px;font-size:17px;letter-spacing:0.148px;color:#1b1b1b;">Time &amp; language</span>
<span class="t" style="left:74.20px;top:587px;font-size:17px;letter-spacing:-0.161px;color:#1b1b1b;">Gaming</span>
<span class="t" style="left:74.20px;top:636px;font-size:17px;letter-spacing:-0.165px;color:#1b1b1b;">Accessibility</span>
<span class="t" style="left:74.20px;top:685px;font-size:17px;letter-spacing:-0.075px;color:#1b1b1b;">Privacy &amp; security</span>
</div></div>
<div class="abs" style="left:1412px;top:776px;width:47px;height:84px;background:linear-gradient(90deg,#e6e9f5,#e1e5f3)"></div>
<div id="menu">
<div class="abs" style="left:0;top:124.5px;width:363px;height:1.2px;background:#dadce6"></div>
<div class="abs" style="left:0;top:206.5px;width:363px;height:1px;background:#e2e4ec;opacity:.8"></div>
<div class="abs" style="left:0;top:243px;width:316px;height:46px;background:linear-gradient(90deg,rgba(214,219,236,.55),rgba(206,213,236,.6))"></div>
<div class="abs" style="left:6px;top:210.5px;width:310px;height:34.5px;border-radius:4px;background:linear-gradient(90deg,#e3e5ea,#d9dce8)"></div>
<div class="abs" style="left:316px;top:207px;width:47px;height:84px;background:linear-gradient(90deg,#e6e9f5,#e1e5f3)"></div>
<!-- new chat -->
<svg class="abs" style="left:19px;top:52px" width="24" height="24" viewBox="0 0 24 24"><path d="M11.4 4.2 H6.2 Q2.6 4.2 2.6 7.8 V16.4 Q2.6 20 6.2 20 H14.8 Q18.4 20 18.4 16.4 V12.4" stroke="#262626" stroke-width="1.45" fill="none" stroke-linecap="round"/><path d="M9.6 14.2 L10.4 10.8 L17.6 3.6 Q19 2.4 20.2 3.6 Q21.4 4.8 20.2 6.2 L13 13.4 Z" stroke="#262626" stroke-width="1.35" fill="none" stroke-linejoin="round"/></svg>
<!-- new call -->
<svg class="abs" style="left:18.3px;top:91px" width="24" height="24" viewBox="0 0 24 24"><path d="M4.6 3.6 L6.6 3 Q7.8 2.8 8.3 3.9 L9.5 6.9 Q9.9 7.9 9.1 8.6 L7.6 9.9 Q8.4 13.4 11.8 15.9 L13.6 15.1 Q14.6 14.7 15.3 15.5 L17.3 17.9 Q17.9 18.8 17.2 19.6 L16 20.8 Q14.4 21.8 12.4 20.8 Q4.6 16.8 3 8.2 Q2.6 4.6 4.6 3.6 Z" stroke="#262626" stroke-width="1.4" fill="none" stroke-linejoin="round"/><path d="M17.4 2.6 V10.4 M13.5 6.5 H21.3" stroke="#262626" stroke-width="1.4" stroke-linecap="round"/></svg>
<!-- whatsapp -->
<svg class="abs" style="left:18px;top:137.5px" width="24" height="24" viewBox="0 0 24 24"><path d="M2.4 20.8 L3.8 16 A8.9 8.9 0 1 1 7.4 19.5 Z" stroke="#277d54" stroke-width="2.1" fill="#e9fbf3" stroke-linejoin="round"/><path d="M8.6 6.6 Q7.6 7.4 7.8 9 Q8.8 13.4 13.6 15.4 Q15.4 16 16.4 14.6 L16.6 13.6 L14.4 12.4 L13.4 13.4 Q11 12.4 10.2 10.2 L11.2 9.2 L10 6.8 Z" fill="#277d54" transform="translate(-0.2 -0.2)"/></svg>
<!-- unpin -->
<svg class="abs" style="left:17.7px;top:176.5px" width="24" height="24" viewBox="0 0 24 24"><path d="M13.6 3 L20.6 10 L18.8 10.8 L15.6 14 L15 18.4 L5.4 8.8 L9.8 8.2 L13 5 Z M9.8 13.8 L3.2 20.6" stroke="#262626" stroke-width="1.4" fill="none" stroke-linejoin="round" stroke-linecap="round"/><path d="M3 3 L21 21" stroke="#262626" stroke-width="1.4" stroke-linecap="round"/></svg>
<!-- end task -->
<svg class="abs" style="left:19px;top:218px" width="22" height="22" viewBox="0 0 22 22"><circle cx="10.4" cy="10.5" r="7.5" stroke="#262626" stroke-width="1.4" fill="none"/><path d="M5.2 15.8 L15.6 5.2" stroke="#262626" stroke-width="1.4"/></svg>
<!-- close -->
<svg class="abs" style="left:20px;top:258px" width="20" height="20" viewBox="0 0 20 20"><path d="M3.4 3.2 L15.6 15.4 M15.6 3.2 L3.4 15.4" stroke="#262626" stroke-width="1.4" stroke-linecap="round"/></svg>
<span class="t" style="left:19.80px;top:16px;font-size:15px;letter-spacing:-1.232px;color:#5f5f5f;">Tasks</span>
<span class="t" style="left:54.90px;top:55px;font-size:17px;letter-spacing:-0.157px;color:#1b1b1b;">New chat</span>
<span class="t" style="left:54.90px;top:94px;font-size:17px;letter-spacing:-0.181px;color:#1b1b1b;">New call</span>
<span class="t" style="left:54.40px;top:141px;font-size:17px;letter-spacing:0.019px;color:#1b1b1b;">WhatsApp</span>
<span class="t" style="left:54.40px;top:180px;font-size:17px;letter-spacing:0.138px;color:#1b1b1b;">Unpin from taskbar</span>
<span class="t" style="left:54.40px;top:220px;font-size:17px;letter-spacing:-0.460px;color:#1b1b1b;">End task</span>
<span class="t" style="left:54.40px;top:259px;font-size:17px;letter-spacing:-0.054px;color:#1b1b1b;">Close window</span>
</div>
<div id="tb">
<div class="abs" style="left:0;top:0;width:1650px;height:1px;background:rgba(255,255,255,.35)"></div>
<!-- start -->
<svg class="abs" style="left:661.5px;top:15.3px" width="29" height="29" viewBox="0 0 29 29"><defs><linearGradient id="wG" x1="0" y1="0" x2="1" y2="1"><stop offset="0" stop-color="#48c6f3"/><stop offset="1" stop-color="#1583dc"/></linearGradient></defs><path d="M0.2 0.2 H13.7 V13.7 H0.2 Z M15.3 0.2 H28.8 V13.7 H15.3 Z M0.2 15.3 H13.7 V28.8 H0.2 Z M15.3 15.3 H28.8 V28.8 H15.3 Z" fill="url(#wG)"/></svg>
<!-- search pill -->
<div class="abs" style="left:708.5px;top:10.8px;width:268.5px;height:37.6px;border-radius:19px;background:#eef2fb;box-shadow:0 0 0 1px rgba(140,150,185,.13),0 1px 2px rgba(0,0,0,.08)"></div>
<svg class="abs" style="left:720px;top:19px" width="22" height="22" viewBox="0 0 22 22"><circle cx="9.9" cy="9.7" r="6.5" stroke="#222" stroke-width="2.1" fill="none"/><path d="M14.6 14.6 L19 19" stroke="#222" stroke-width="2.3" stroke-linecap="round"/></svg>
<!-- task view -->
<svg class="abs" style="left:991px;top:14px" width="34" height="32" viewBox="0 0 34 32"><defs><linearGradient id="tvA" x1="0" y1="0" x2="1" y2="1"><stop offset="0" stop-color="#f8f8f8"/><stop offset="1" stop-color="#c9c9c9"/></linearGradient><linearGradient id="tvB" x1="0" y1="0" x2="1" y2="1"><stop offset="0" stop-color="#4a4a4a"/><stop offset="1" stop-color="#1c1c1c"/></linearGradient></defs><rect x="2" y="9.6" width="21.6" height="19" rx="2" fill="url(#tvB)"/><rect x="9.2" y="1.6" width="22.4" height="19" rx="2" fill="url(#tvA)" opacity="0.92"/><rect x="9.2" y="9.6" width="14.4" height="11" fill="#9a9a9a" opacity="0.75"/></svg>
<!-- edge -->
<svg class="abs" style="left:1046px;top:14px" width="32" height="32" viewBox="0 0 32 32"><defs><linearGradient id="eA" x1="0" y1="0" x2="1" y2="0"><stop offset="0" stop-color="#1a7fd0"/><stop offset="0.5" stop-color="#2db8c8"/><stop offset="1" stop-color="#56d86a"/></linearGradient><linearGradient id="eB" x1="0" y1="0" x2="1" y2="1"><stop offset="0" stop-color="#1b8fd8"/><stop offset="1" stop-color="#0f4fa0"/></linearGradient></defs><path d="M1.2 17 C0.6 7.6 8 1 16.4 1 C25.4 1 31 7.6 31 14.4 C31 19.6 27 22.2 23 22.2 C19.6 22.2 18 20.8 18.6 19.4 C19.6 17.6 20.2 16.4 19.6 14.4 C18.6 11.6 15.6 10 12.4 10 C6.6 10 1.8 13 1.2 17 Z" fill="url(#eA)"/><path d="M1.2 17 C1.8 13 6.6 10 12.4 10 C15.6 10 18.6 11.6 19.6 14.4 C17.4 12.4 13.2 12.6 11.6 16 C9.6 20.4 12.6 27.6 20.4 30 C10.4 33 1.8 26 1.2 17 Z" fill="url(#eB)"/><path d="M11.6 16 C9.6 20.4 12.6 27.6 20.4 30 C25.6 28.4 28.6 25 29.8 21.6 C26.8 24.8 20.8 25.6 17.4 23.4 C14.4 21.4 14 18 15 16 C14 14.6 12.4 14.8 11.6 16 Z" fill="#0d4a9a"/></svg>
<div class="ind" style="left:1058.3px;width:7.4px"></div>
<!-- chrome -->
<svg class="abs" style="left:1101px;top:14.5px" width="30" height="30" viewBox="0 0 30 30"><circle cx="15" cy="15" r="14.6" fill="#fbbf12"/><path d="M15 15 L2.36 7.7 A14.6 14.6 0 0 1 27.64 7.7 Z" fill="#e8412f"/><path d="M15 15 L2.36 7.7 A14.6 14.6 0 0 0 15 29.6 L21.4 18.6 Z" fill="#2f9e4d"/><path d="M15 8.2 H27.9 A14.6 14.6 0 0 0 15 0.4 Z" fill="#e8412f"/><path d="M15 8.2 H27.3" stroke="#e8412f" stroke-width="0"/><path d="M15 15 L9.1 18.4 L15 29.6 A14.6 14.6 0 0 1 2.36 7.7 Z" fill="#2f9e4d"/><path d="M15 15 L20.9 18.4 L15 29.6 A14.6 14.6 0 0 0 27.64 7.7 L15 7.7 Z" fill="#fbbf12"/><path d="M15 7.7 H27.64 A14.6 14.6 0 0 0 2.36 7.7 L9.1 18.4 Z" fill="#e8412f"/><circle cx="15" cy="15" r="6.9" fill="#fff"/><circle cx="15" cy="15" r="5.5" fill="#3b7ded"/></svg>
<!-- explorer -->
<svg class="abs" style="left:1155px;top:14px" width="30" height="30" viewBox="0 0 30 30"><defs><linearGradient id="fA" x1="0" y1="0" x2="0" y2="1"><stop offset="0" stop-color="#ffd96a"/><stop offset="1" stop-color="#f5b82e"/></linearGradient></defs><path d="M0.6 3.6 Q0.6 1.8 2.4 1.8 H9.2 Q10.2 1.8 11 2.6 L13 4.8 H27.6 Q29.4 4.8 29.4 6.6 V10 H0.6 Z" fill="#e5a21d"/><rect x="0.6" y="6.6" width="28.8" height="21.6" rx="1.6" fill="url(#fA)"/><path d="M5.8 28.2 V22 Q5.8 20.4 7.4 20.4 H22.6 Q24.2 20.4 24.2 22 V28.2 Z" fill="#1b73cf"/><path d="M7.8 28.2 V25 H22.2 V28.2 Z" fill="#1359ad"/></svg>
<!-- teal waves -->
<svg class="abs" style="left:1209px;top:13.5px" width="32" height="32" viewBox="0 0 32 32"><defs><linearGradient id="wvG" x1="0" y1="0" x2="0" y2="1"><stop offset="0" stop-color="#2c9fc2"/><stop offset="0.55" stop-color="#10aa9c"/><stop offset="1" stop-color="#0a878e"/></linearGradient></defs><g fill="url(#wvG)" stroke="#9aeef4" stroke-width="0.7" stroke-linejoin="round"><path d="M7.5 29.8 C-2 22 -1 4 16 1.2 C22 0.5 27 3 29.5 7 C29.8 8.5 28.5 9.4 27.5 8.4 C24 4.5 19 4 15 6 C6 10.5 5.5 20 11.5 26.5 Z"/><path d="M13.2 24 C6 17 8 6.5 18.5 4.6 C23 4 26.5 5.5 28.5 7.8 C25 6.8 21.5 6.6 18.5 8.4 C12 12 12.5 17.5 16.4 21.4 Z"/><path d="M19.5 18.4 C14.5 14 16 7.5 23 6.6 C25.5 6.4 27.5 7 28.8 8.2 C26 8 23.5 8.6 22 10.2 C19.6 12.6 20.4 14.6 22.6 16 Z"/></g><circle cx="28.3" cy="8" r="1.5" fill="#0f8f9c"/></svg>
<!-- whatsapp active -->
<div class="abs" style="left:1255.2px;top:6px;width:47.5px;height:47.3px;border-radius:4.5px;background:#eef0f8"></div>
<svg class="abs" style="left:1262.5px;top:14px" width="32" height="32" viewBox="0 0 32 32"><path d="M2.2 29.6 L4.2 22.6 A13 13 0 1 1 9.4 27.6 Z" stroke="#24894c" stroke-width="3" fill="none" stroke-linejoin="round"/><path d="M11.4 8.8 Q9.8 10 10.2 12.6 Q11.6 18.6 18.2 21.6 Q20.8 22.4 22.4 20.4 L22.8 18.6 L19.6 16.8 L18 18.4 Q14.8 17 13.6 13.8 L15.2 12.2 L13.4 8.8 Z" fill="#24894c"/></svg>
<div class="abs" style="left:1280px;top:8.6px;width:19px;height:19px;border-radius:50%;background:#1f2d4a"></div>
<div class="abs" style="left:1269px;top:49.3px;width:19.4px;height:3.5px;border-radius:2px;background:#1f2d4a"></div>
<!-- word -->
<svg class="abs" style="left:1317px;top:15px" width="28" height="28" viewBox="0 0 28 28"><defs><linearGradient id="wdA" x1="0" y1="0" x2="1" y2="0"><stop offset="0" stop-color="#39c6f0"/><stop offset="1" stop-color="#8f8cf0"/></linearGradient></defs><rect x="5" y="0.8" width="22.4" height="9" rx="2" fill="url(#wdA)"/><rect x="5" y="9" width="22.4" height="9" fill="#2b7be4"/><path d="M5 17.6 H27.4 V24.6 Q27.4 27 25 27 H7.4 Q5 27 5 24.6 Z" fill="#1746c0"/><rect x="0.6" y="11.6" width="13.4" height="13.4" rx="2.4" fill="#1a4fc4"/></svg>
<!-- zip folder -->
<svg class="abs" style="left:1375px;top:14.5px" width="26" height="30" viewBox="0 0 26 30"><defs><linearGradient id="zA" x1="0" y1="0" x2="1" y2="0"><stop offset="0" stop-color="#f7dc8a"/><stop offset="1" stop-color="#e6bd5a"/></linearGradient></defs><path d="M1.4 3.6 L7.6 1.2 L9 2.6 H19.4 L21.6 23.6 L18.2 24.8 L10.4 26.4 L2.6 28.6 Z" fill="url(#zA)"/><path d="M7.6 3.4 H11.6 L10.6 26.4 L8 27 Z" fill="#b98d2e"/><path d="M19.4 22 L24.6 20.6 L23 25.6 L18.2 24.8 Z" fill="#9aa0a8" opacity=".8"/></svg>
<!-- settings gear -->
<svg class="abs" style="left:1426px;top:14.5px" width="30" height="30" viewBox="0 0 30 30"><g transform="translate(15 14.6)"><g fill="#707c8c" transform="rotate(30)"><circle r="11.2"/><rect x="-4.4" y="-15" width="8.8" height="8" rx="2"/><rect x="-4.4" y="-15" width="8.8" height="8" rx="2" transform="rotate(60)"/><rect x="-4.4" y="-15" width="8.8" height="8" rx="2" transform="rotate(120)"/><rect x="-4.4" y="-15" width="8.8" height="8" rx="2" transform="rotate(180)"/><rect x="-4.4" y="-15" width="8.8" height="8" rx="2" transform="rotate(240)"/><rect x="-4.4" y="-15" width="8.8" height="8" rx="2" transform="rotate(300)"/></g><circle r="7" fill="#fff"/><circle r="5.5" fill="#1565c0"/></g></svg>
<div class="ind" style="left:1437.3px;width:7.6px"></div>
<span class="t" style="left:752.60px;top:22px;font-size:17.5px;letter-spacing:-1.136px;color:#555;">Search</span>
<span class="t" style="left:1286.40px;top:12px;font-size:13.5px;letter-spacing:0.000px;color:#fff;font-weight:700;">1</span>
<span class="t" style="left:1319.60px;top:31px;font-size:9.5px;letter-spacing:0.000px;color:#fff;font-weight:700;">W</span>
</div>

</body></html>
